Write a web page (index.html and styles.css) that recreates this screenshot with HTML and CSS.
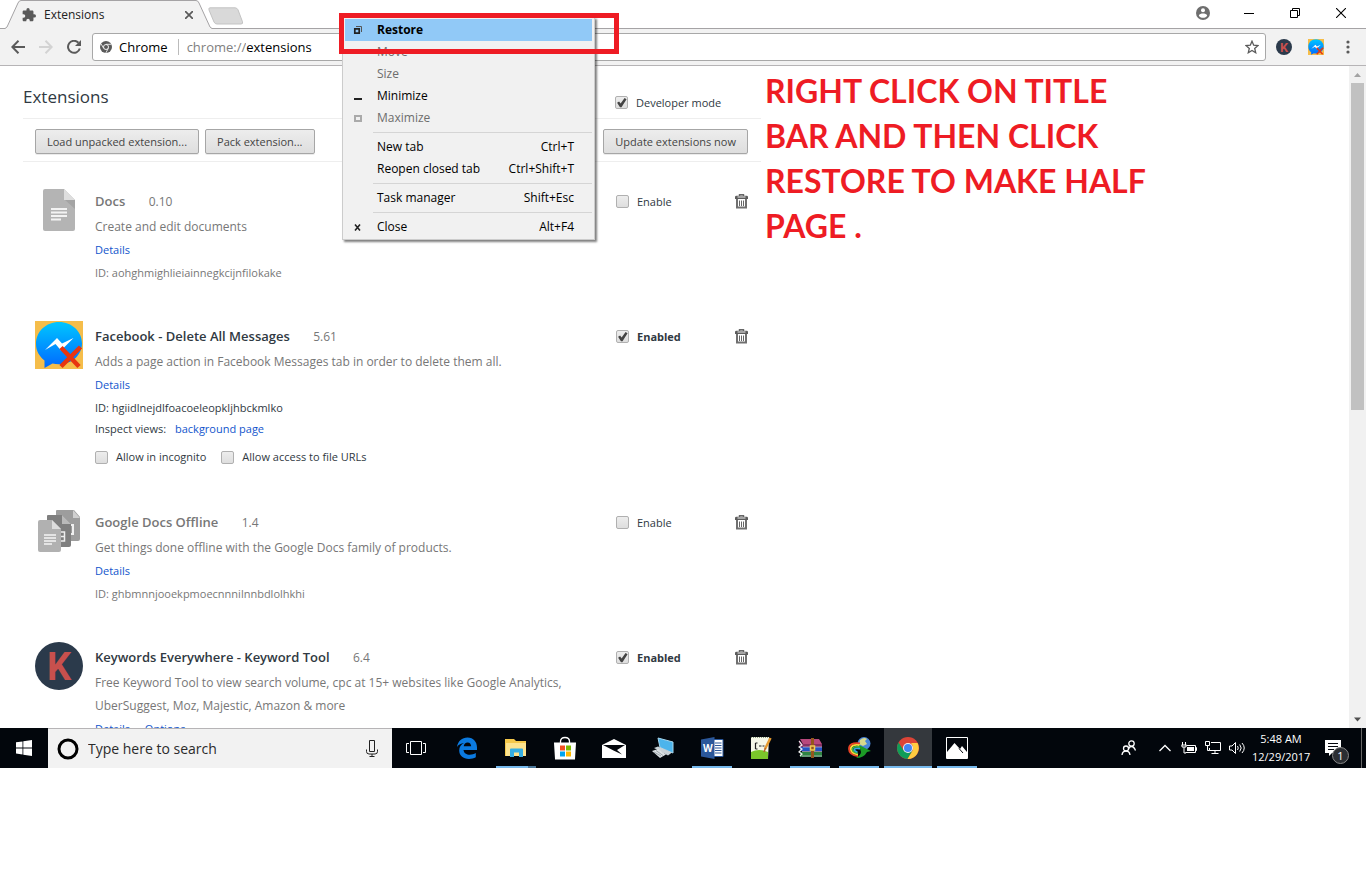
FILE: index.html
```html
<!DOCTYPE html>
<html lang="en">
<head>
    <meta charset="UTF-8">
    <meta name="viewport" content="width=device-width, initial-scale=1.0">
    <title>Extensions</title>
    <link rel="stylesheet" href="styles.css">
</head>
<body>
<!-- shared symbols -->
<svg class="symbols" aria-hidden="true">
    <symbol id="messenger" viewBox="0 0 48 48">
        <linearGradient id="msgBlue" x1="0" y1="0" x2="0" y2="1">
            <stop offset="0" stop-color="#00c6ff"/>
            <stop offset="1" stop-color="#0068ff"/>
        </linearGradient>
        <rect width="48" height="48" fill="#f5bd4a"/>
        <path d="M24 1C11 1 1 10.500 1 23c0 7 3.500 12.500 8.500 16.500V47l8-4.500c2 .5 4.300.8 6.500.8 13 0 23-9.300 23-21S37 1 24 1z" fill="url(#msgBlue)"/>
        <path d="M10 29l12-12 5 5.500L38.500 17 26 29.500 20.500 23z" fill="#fff"/>
        <path d="M26 26.500l18 19M45.500 26L26 45.500" stroke="#e8350f" stroke-width="4.500" fill="none"/>
    </symbol>
    <symbol id="trash" viewBox="0 0 13 15">
        <path d="M4.500 2V.8h4V2" fill="none" stroke="#666" stroke-width="1.400"/>
        <path d="M0 5V3q0-1.300 1.500-1.300h10Q13 1.700 13 3v2z" fill="#5c5c5c"/>
        <path d="M2 5v8.500h9V5" fill="none" stroke="#707070" stroke-width="2"/>
        <path d="M4.500 6.500v5.500M6.500 6.500v5.500M8.500 6.500v5.500" stroke="#666" stroke-width="1"/>
        <path d="M2.500 3h8" stroke="#fff" stroke-width=".9"/>
    </symbol>
    <symbol id="chromeMono" viewBox="0 0 12 12">
        <circle cx="6" cy="6" r="6" fill="#5a5a5a"/>
        <circle cx="6" cy="6" r="2.500" fill="#5a5a5a" stroke="#f2f2f2" stroke-width="1"/>
        <path d="M6 3.300h5.400M3.700 7.300L1 2.800M8.300 7.300L5.800 12" stroke="#f2f2f2" stroke-width=".9"/>
    </symbol>
</svg>

<div class="desktop">
    <div class="tabstrip">
        <div class="tab">
            <svg class="tab-shape" viewBox="0 0 207 29" width="207" height="29">
                <path d="M0 28.500L2 27 13 3q1-2.500 3-2.500h175q2 0 3 2.500l11 24 2 1.500V29H0z" fill="#f2f2f2"/>
                <path d="M0 28.500L2 27 13 3q1-2.500 3-2.500h175q2 0 3 2.500l11 24 2 1.500" fill="none" stroke="#a5a3a5"/>
            </svg>
            <svg width="14" height="14" viewBox="1 1 22 22"><path fill="#5a5a5a" d="M20.500 11H19V7c0-1.100-.9-2-2-2h-4V3.500a2.500 2.500 0 0 0-5 0V5H4c-1.100 0-2 .9-2 2v3.800h1.500a2.700 2.700 0 0 1 0 5.400H2V20c0 1.100.9 2 2 2h3.800v-1.500a2.700 2.700 0 0 1 5.400 0V22H17c1.100 0 2-.9 2-2v-4h1.500a2.500 2.500 0 0 0 0-5z"/></svg>
            <span class="tab-title">Extensions</span>
            <button class="tab-close" aria-label="Close tab"><svg width="8" height="8" viewBox="0 0 8 8"><path d="M0 0l8 8M8 0L0 8" stroke="#5a5a5a" stroke-width="1.700"/></svg></button>
        </div>
        <button class="new-tab" aria-label="New tab"><svg width="36" height="18" viewBox="0 0 36 18"><path d="M2 .8h25q2 0 3 2l4.500 12q.7 2.200-1.500 2.200H9q-2 0-3-2L1 3Q.3.800 2 .8z" fill="#d9d9d9" stroke="#c3c3c3"/></svg></button>
        <div class="window-buttons">
            <button aria-label="Profile"><svg width="14" height="14" viewBox="0 0 14 14"><circle cx="7" cy="7" r="7" fill="#6e6e6e"/><circle cx="7" cy="4.300" r="2" fill="#fff"/><path d="M2.800 9.500C4 6.900 10 6.900 11.200 9.500 10 12.600 4 12.600 2.800 9.500z" fill="#fff"/></svg></button>
            <button aria-label="Minimize"><svg width="10" height="10" viewBox="0 0 10 10"><path d="M0 5.500h10" stroke="#000"/></svg></button>
            <button aria-label="Restore"><svg width="10" height="10" viewBox="0 0 10 10"><path d="M.5 2.500h7v7h-7zM2.500 2.500v-2h7v7h-2" fill="none" stroke="#000"/></svg></button>
            <button aria-label="Close"><svg width="10" height="10" viewBox="0 0 10 10"><path d="M0 0l10 10M10 0L0 10" stroke="#000" stroke-width="1.100"/></svg></button>
        </div>
    </div>

    <div class="toolbar">
        <button aria-label="Back"><svg width="14" height="14" viewBox="0 0 14 14"><path d="M14 7H1.500M7.500.8L1.300 7l6.200 6.200" fill="none" stroke="#5a5a5a" stroke-width="2"/></svg></button>
        <button aria-label="Forward"><svg width="14" height="14" viewBox="0 0 14 14"><path d="M0 7h12.500M6.500.8L12.700 7l-6.200 6.200" fill="none" stroke="#d3d3d3" stroke-width="2"/></svg></button>
        <button aria-label="Reload"><svg width="14" height="14" viewBox="0 0 14 14"><path d="M12.800 8.500a6 6 0 1 1-1.400-5.800" fill="none" stroke="#5a5a5a" stroke-width="2"/><path d="M14 0v6H8z" fill="#5a5a5a"/></svg></button>
        <div class="omnibox">
            <svg width="12" height="12"><use href="#chromeMono"/></svg>
            <span class="origin">Chrome</span>
            <label class="scheme" for="address">chrome://</label>
            <input type="text" id="address" value="extensions">
            <button class="star" aria-label="Bookmark"><svg width="14" height="14" viewBox="0 0 14 14"><path d="M7 1.200l1.700 4 4.300.4-3.300 2.800 1 4.300L7 10.400l-3.700 2.300 1-4.300L1 5.600l4.300-.4z" fill="none" stroke="#5a5a5a" stroke-width="1.300"/></svg></button>
        </div>
        <div class="actions">
            <button aria-label="Keywords Everywhere"><svg width="16" height="16" viewBox="0 0 48 48"><circle cx="24" cy="24" r="24" fill="#2b3a4b"/><text x="24" y="38" text-anchor="middle" class="keywords-k">K</text></svg></button>
            <button aria-label="Delete All Messages"><svg width="16" height="16"><use href="#messenger"/></svg></button>
            <button class="more" aria-label="Menu"><svg width="4" height="14" viewBox="0 0 4 14"><g fill="#5a5a5a"><circle cx="2" cy="2" r="1.600"/><circle cx="2" cy="7" r="1.600"/><circle cx="2" cy="12" r="1.600"/></g></svg></button>
        </div>
    </div>

    <div class="viewport">
        <main class="page">
            <header class="page-header">
                <h1>Extensions</h1>
                <label class="check dev-mode"><input type="checkbox" checked>Developer mode</label>
            </header>
            <div class="dev-controls">
                <button class="btn">Load unpacked extension...</button>
                <button class="btn">Pack extension...</button>
                <button class="btn btn-update">Update extensions now</button>
            </div>

            <section class="extension disabled">
                <svg width="48" height="48" viewBox="0 0 48 48">
                    <path d="M10 3h19l11 11v29q0 2-2 2H10q-2 0-2-2V5q0-2 2-2z" fill="#b4b4b4"/>
                    <path d="M29 3l11 11H29z" fill="#dedede"/>
                    <path d="M30 14h10v9z" fill="#a4a4a4"/>
                    <path d="M16 23h16M16 26.500h16M16 30h16M16 33.500h10" stroke="#f3f3f3" stroke-width="2"/>
                </svg>
                <div class="info">
                    <h2>Docs <span class="version">0.10</span></h2>
                    <p class="description">Create and edit documents</p>
                    <p class="links"><a href="#">Details</a></p>
                    <p class="ext-id">ID: aohghmighlieiainnegkcijnfilokake</p>
                </div>
                <label class="check"><input type="checkbox">Enable</label>
                <button class="trash" aria-label="Remove"><svg width="13" height="15"><use href="#trash"/></svg></button>
            </section>

            <section class="extension">
                <svg width="48" height="48"><use href="#messenger"/></svg>
                <div class="info">
                    <h2>Facebook - Delete All Messages <span class="version">5.61</span></h2>
                    <p class="description">Adds a page action in Facebook Messages tab in order to delete them all.</p>
                    <p class="links"><a href="#">Details</a></p>
                    <p class="ext-id">ID: hgiidlnejdlfoacoeleopkljhbckmlko</p>
                    <p class="views">Inspect views: <a href="#">background page</a></p>
                    <div class="options">
                        <label class="check"><input type="checkbox">Allow in incognito</label>
                        <label class="check"><input type="checkbox">Allow access to file URLs</label>
                    </div>
                </div>
                <label class="check enabled"><input type="checkbox" checked>Enabled</label>
                <button class="trash" aria-label="Remove"><svg width="13" height="15"><use href="#trash"/></svg></button>
            </section>

            <section class="extension disabled">
                <svg width="48" height="48" viewBox="0 0 48 48">
                    <path d="M22 3h17l6 7v22q0 2-2 2H22q-1 0-1-2V4q0-1 1-1z" fill="#9d9d9d"/>
                    <path d="M38 3l7 8h-7z" fill="#d0d0d0"/>
                    <path d="M34 18h4v9h-4" fill="none" stroke="#f0f0f0" stroke-width="2"/>
                    <path d="M13 8h14l9 9v21q0 2-2 2H13q-1 0-1-2V9q0-1 1-1z" fill="#7f7f7f"/>
                    <path d="M27 8l9 9h-9z" fill="#bababa"/>
                    <path d="M22 25h7.500v9H22M22 29.500h7" fill="none" stroke="#eee" stroke-width="1.500"/>
                    <path d="M5 13h12l9 9v21q0 2-2 2H5q-2 0-2-2V15q0-2 2-2z" fill="#b1b1b1"/>
                    <path d="M17 13l9 9h-9z" fill="#ddd"/>
                    <path d="M9 28h12M9 31h12M9 34h12M9 37h8" stroke="#f5f5f5" stroke-width="1.500"/>
                </svg>
                <div class="info">
                    <h2>Google Docs Offline <span class="version">1.4</span></h2>
                    <p class="description">Get things done offline with the Google Docs family of products.</p>
                    <p class="links"><a href="#">Details</a></p>
                    <p class="ext-id">ID: ghbmnnjooekpmoecnnnilnnbdlolhkhi</p>
                </div>
                <label class="check"><input type="checkbox">Enable</label>
                <button class="trash" aria-label="Remove"><svg width="13" height="15"><use href="#trash"/></svg></button>
            </section>

            <section class="extension">
                <svg width="48" height="48" viewBox="0 0 48 48"><circle cx="24" cy="24" r="24" fill="#2b3a4b"/><text x="24" y="38" text-anchor="middle" class="keywords-k">K</text></svg>
                <div class="info">
                    <h2>Keywords Everywhere - Keyword Tool <span class="version">6.4</span></h2>
                    <p class="description">Free Keyword Tool to view search volume, cpc at 15+ websites like Google Analytics, UberSuggest, Moz, Majestic, Amazon &amp; more</p>
                    <p class="links"><a href="#">Details</a> <a href="#">Options</a></p>
                </div>
                <label class="check enabled"><input type="checkbox" checked>Enabled</label>
                <button class="trash" aria-label="Remove"><svg width="13" height="15"><use href="#trash"/></svg></button>
            </section>
        </main>
        <div class="scrollbar">
            <svg width="17" height="17" viewBox="0 0 17 17"><path d="M5 11l3.500-4 3.500 4z" fill="#a3a3a3"/></svg>
            <div class="track"><div class="thumb"></div></div>
            <svg width="17" height="17" viewBox="0 0 17 17"><path d="M5 6.500l3.500 4 3.500-4z" fill="#505050"/></svg>
        </div>
    </div>

    <div class="taskbar">
        <button class="start" aria-label="Start"><svg width="16" height="16" viewBox="0 0 16 16"><path d="M0 2.300L6.500 1.400v6.100H0zM7.300 1.300L16 0v7.500H7.300zM0 8.400h6.500v6.100L0 13.600zM7.300 8.400H16V16l-8.700-1.300z" fill="#fff"/></svg></button>
        <div class="search">
            <svg width="22" height="22" viewBox="0 0 22 22"><circle cx="11" cy="11" r="9" fill="none" stroke="#000" stroke-width="3"/></svg>
            <input type="text" aria-label="Search" placeholder="Type here to search">
            <svg width="12" height="17" viewBox="0 0 12 17"><path d="M3.500.5h5v11h-5zM.5 9.500v2q0 2.500 2.500 2.500h6q2.500 0 2.500-2.500v-2M6 14v2.500M3.500 16.500h5" fill="none" stroke="#222"/></svg>
        </div>
        <button class="app" aria-label="Task view"><svg width="20" height="14" viewBox="0 0 20 14"><path d="M4.500.5h11v13h-11zM3 2.500H.5v9H3M17 2.500h2.500v9H17" fill="none" stroke="#fff"/></svg></button>
        <div class="apps">
            <button class="app" aria-label="Edge"><svg width="22" height="22" viewBox="0 0 22 22"><path d="M1 10C2 4 6 .5 11.500.5 17.500.5 21 5 21 10.500V13H7.500c.3 3.200 3 4.700 6.300 4.700 2.200 0 4.200-.6 6-1.700v4.300C17.800 21.400 15.500 22 13 22 7 22 3.200 18.500 3.200 13.600 3.200 10 5 7.500 8 6 5 6.300 2.700 7.500 1 10zM7.700 9.300h7.500C15 6.800 13.800 5.500 11.700 5.500 9.500 5.500 8 7 7.700 9.300z" fill="#0b7ae0"/></svg></button>
            <button class="app running multi" aria-label="File Explorer"><svg width="22" height="20" viewBox="0 0 22 20"><path d="M0 1h9l2 2h10v15H0z" fill="#f5c84b"/><path d="M1 5h20v13H1z" fill="#fde38f"/><path d="M5 19v-7.500q0-1 1-1h11q1 0 1 1V19h-4v-4.500H9V19z" fill="#36aee2"/></svg></button>
            <button class="app" aria-label="Store"><svg width="24" height="24" viewBox="0 0 24 24"><path d="M7.500 8V5.500q0-4 4.500-4t4.500 4V8" fill="none" stroke="#fff" stroke-width="1.300"/><path d="M1 6.500h22l-1 17H2z" fill="#fff"/><path d="M7 9.500h5v5H7z" fill="#f25022"/><path d="M13 9.500h5v5h-5z" fill="#7fba00"/><path d="M7 15.500h5v5H7z" fill="#00a4ef"/><path d="M13 15.500h5v5h-5z" fill="#ffb900"/></svg></button>
            <button class="app" aria-label="Mail"><svg width="24" height="19" viewBox="0 0 24 19"><path d="M0 6L12 0l12 6v13H0z" fill="#fff"/><path d="M1 6h22l-8 5 5 4.500-8.500-4z" fill="#04070d"/></svg></button>
            <button class="app" aria-label="Computer"><svg width="24" height="22" viewBox="0 0 24 22"><path d="M7 1l15 4v11L9 10.500z" fill="#4cb4ec" stroke="#a5d6ef"/><path d="M3 11l4-1.500 14 6-4 3z" fill="#c9d1d6"/><path d="M1 14l6-2 8 5.500-6 3.500z" fill="#dce1e4"/><path d="M3 15l7 4M5 13.500l7 5" stroke="#8c969c" stroke-width=".8"/></svg></button>
            <button class="app running" aria-label="Word"><svg width="23" height="22" viewBox="0 0 23 22"><path d="M12 2.500h10v17H12z" fill="#fff" stroke="#2b579a"/><path d="M14 6h6.500M14 8.500h6.500M14 11h6.500M14 13.500h6.500M14 16h6.500" stroke="#2b579a"/><path d="M0 2.500L13.500 0v22L0 19.500z" fill="#2b579a"/><text x="2" y="15" class="word-w">W</text></svg></button>
            <button class="app" aria-label="Notes"><svg width="24" height="24" viewBox="0 0 24 24"><path d="M2 1h18l-1 22H2z" fill="#f5f7e8"/><path d="M2 16q8-4 17 0v7H2z" fill="#7ac62b"/><path d="M2 1.500h18" stroke="#8a9a80" stroke-dasharray="1 1"/><path d="M6.500 7v6M6.500 7h2M6.500 13h2M10 10h2.500M13.500 10h2" fill="none" stroke="#222" stroke-width="1.200"/><path d="M21.500 2L16 13" stroke="#e59a2f" stroke-width="2.500"/><path d="M16.500 12L15 16" stroke="#b5652b" stroke-width="1.500"/></svg></button>
            <button class="app running" aria-label="WinRAR"><svg width="24" height="20" viewBox="0 0 24 20"><path d="M2 1h19l3 5H5z" fill="#b8487d"/><path d="M1 2l4 4h19v3H2z" fill="#863064"/><path d="M2 9h22v4H2z" fill="#2553c5"/><path d="M2 14h22v5H2z" fill="#2e8442"/><path d="M1 3l3 4-3 2 3 2-3 3 3 2-2 2" fill="none" stroke="#eee" stroke-width="1.200"/><path d="M5 9h19M4 13.500h20M4 18h20" stroke="#c8c2d7" stroke-width=".7"/><path d="M13 0h3v20h-3z" fill="#95561d"/><path d="M12.500 8h4v4h-4z" fill="none" stroke="#f1cb56" stroke-width="1.500"/></svg></button>
            <button class="app running" aria-label="Download Manager"><svg width="24" height="22" viewBox="0 0 24 22"><circle cx="17" cy="6.500" r="6.500" fill="#4a86d8"/><path d="M13 3q4-3.500 7-1l-2 2 2 3-4 2-4-2z" fill="#d8d98c"/><path d="M13 6.500Q2 5 2 12q0 6 9 7" fill="none" stroke="#e84225" stroke-width="1.800"/><path d="M13 8.200Q3.800 7 3.800 12q0 4.500 7.200 5.500" fill="none" stroke="#ffd838" stroke-width="1.800"/><path d="M13 10Q5.600 9 5.600 12q0 3 5 4" fill="none" stroke="#38b54a" stroke-width="1.800"/><path d="M13 11.600Q7.400 11 7.400 12.500q0 1.500 3 2.500" fill="none" stroke="#36a8e8" stroke-width="1.600"/><path d="M12 8l12 6-4 1q-3 6-11 6 5-3 5-6z" fill="#1c9a26"/></svg></button>
            <button class="app running active" aria-label="Chrome"><svg width="22" height="22" viewBox="0 0 22 22"><circle cx="11" cy="11" r="11" fill="#db4437"/><path d="M1.500 5.500A11 11 0 0 0 10.500 22l5-8.500H11L6.700 13.500z" fill="#0f9d58"/><path d="M20.600 6A11 11 0 0 1 10.500 22l5.200-8.500Q17 9 14 6z" fill="#ffcd40"/><circle cx="11" cy="11" r="5" fill="#f1f1f1"/><circle cx="11" cy="11" r="4" fill="#4285f4"/></svg></button>
            <button class="app running" aria-label="Photos"><svg width="22" height="22" viewBox="0 0 22 22"><path d="M.5.5h21v21H.5z" fill="none" stroke="#fff"/><path d="M1 15l7.500-9 5.500 6L16 9l5 6v6H1z" fill="#fff"/><path d="M13 11.500l4 4.500" stroke="#04070d"/></svg></button>
        </div>
        <div class="tray">
            <button aria-label="People"><svg width="16" height="16" viewBox="0 0 16 16"><g fill="none" stroke="#fff" stroke-width="1.300"><circle cx="10.500" cy="3.500" r="2.700"/><path d="M7.500 9.500q.5-3 3-3t4 4"/><circle cx="5" cy="8.500" r="2.500"/><path d="M1 15q.5-4 4-4t4 4"/></g></svg></button>
            <button aria-label="Show hidden icons"><svg width="12" height="8" viewBox="0 0 12 8"><path d="M.5 7L6 1.500 11.500 7" fill="none" stroke="#fff" stroke-width="1.300"/></svg></button>
            <button aria-label="Battery"><svg width="16" height="12" viewBox="0 0 16 12"><path d="M5.500 3.500h9v7H4.500M14.500 5.500h1v3h-1" fill="none" stroke="#fff"/><path d="M6 5h7v4H6z" fill="#fff"/><path d="M1.500 0v3M4.500 0v3M.5 3h5M1 3v2h4V3M3 5v6h2" fill="none" stroke="#fff"/></svg></button>
            <button aria-label="Network"><svg width="16" height="14" viewBox="0 0 16 14"><path d="M6 1.500h9.500v8h-11V7M10 9.500v3M6.500 12.500h7M.5.500h4v4h-4zM2.500 4.500v5h2" fill="none" stroke="#fff"/></svg></button>
            <button aria-label="Volume"><svg width="17" height="14" viewBox="0 0 17 14"><path d="M.5 5H3l3.500-3.500v11L3 9H.500z" fill="none" stroke="#fff"/><path d="M8.500 5q1.500 2 0 4M10.700 3.500q3 3.500 0 7M13 2q4.500 5 0 10" fill="none" stroke="#fff"/></svg></button>
            <div class="clock">5:48 AM<br>12/29/2017</div>
            <button class="notifications" aria-label="Notifications">
                <svg width="16" height="16" viewBox="0 0 16 16"><path d="M0 0h16v13H7l-3 3v-3H0z" fill="#fff"/><path d="M3 3.500h10M3 6.500h10M3 9.500h6" stroke="#04070d"/></svg>
                <span class="count">1</span>
            </button>
            <div class="show-desktop"></div>
        </div>
    </div>
</div>

<!-- window menu -->
<div class="menu">
    <button class="menu-item selected"><svg width="12" height="8" viewBox="0 0 12 8"><path d="M2.800 2.800h4.400v4.400H2.800z" fill="none" stroke="#222" stroke-width="1.700"/><path d="M4 .5h5.500V6" fill="none" stroke="#555"/></svg>Restore</button>
    <button class="menu-item" disabled><i></i>Move</button>
    <button class="menu-item" disabled><i></i>Size</button>
    <button class="menu-item"><svg width="12" height="8" viewBox="0 0 12 8"><path d="M2 6h8v2H2z" fill="#222"/></svg>Minimize</button>
    <button class="menu-item" disabled><svg width="12" height="8" viewBox="0 0 12 8"><path d="M3 2h6v5H3z" fill="none" stroke="#aaa" stroke-width="2"/></svg>Maximize</button>
    <hr>
    <button class="menu-item"><i></i>New tab<kbd>Ctrl+T</kbd></button>
    <button class="menu-item"><i></i>Reopen closed tab<kbd>Ctrl+Shift+T</kbd></button>
    <hr>
    <button class="menu-item"><i></i>Task manager<kbd>Shift+Esc</kbd></button>
    <hr>
    <button class="menu-item"><svg width="12" height="8" viewBox="0 0 12 8"><path d="M3 1.500l5 6M8 1.500l-5 6" stroke="#222" stroke-width="1.600"/></svg>Close<kbd>Alt+F4</kbd></button>
</div>

<div class="highlight-box"></div>
<p class="note">RIGHT CLICK ON TITLE<br>BAR AND THEN CLICK<br>RESTORE TO MAKE HALF<br>PAGE .</p>
</body>
</html>
```
FILE: styles.css
```css
* {
    box-sizing: border-box;
}
body {
    margin: 0;
    background: #fff;
    font-family: "Open Sans", "Noto Sans", sans-serif;
    font-size: 12px;
    color: #303942;
}
button {
    font-family: inherit;
    font-size: inherit;
    color: inherit;
    border: none;
    background: none;
    padding: 0;
}
svg {
    display: block;
    flex: none;
}
.symbols {
    position: absolute;
    width: 0;
    height: 0;
}
.keywords-k {
    font-family: Roboto, sans-serif;
    font-size: 38px;
    font-weight: bold;
    fill: #c8504d;
}
.desktop {
    display: flex;
    flex-direction: column;
    height: 100vh;
    padding-bottom: 114px;
}

/* tab strip */
.tabstrip {
    display: flex;
    height: 29px;
    flex: none;
    border-bottom: 1px solid #a5a3a5;
}
.tab {
    position: relative;
    display: flex;
    align-items: center;
    width: 207px;
    height: 29px;
    margin-left: 5px;
    padding: 0 19px 0 17px;
    color: #222;
}
.tab svg {
    position: relative;
}
.tab .tab-shape {
    position: absolute;
    left: 0;
    top: 0;
}
.tab-title {
    position: relative;
    flex: 1;
    margin-left: 8px;
}
.new-tab {
    align-self: flex-start;
    padding-top: 7px;
    margin-left: -4px;
}
.window-buttons {
    display: flex;
    align-items: center;
    margin: 0 2px 0 auto;
    padding-bottom: 2px;
}
.window-buttons button {
    display: flex;
    justify-content: center;
    width: 46px;
}

/* toolbar */
.toolbar {
    display: flex;
    align-items: center;
    gap: 14px;
    height: 37px;
    flex: none;
    padding: 0 16px 0 11px;
    background: #f2f2f2;
    border-bottom: 1px solid #b6b4b6;
}
.omnibox {
    display: flex;
    align-items: center;
    flex: 1;
    height: 28px;
    margin: 0 -4px 0 -3px;
    padding: 0 6px 0 7px;
    background: #fff;
    border: 1px solid #a8a8a8;
    border-radius: 3px;
    font-size: 13px;
    color: #000;
}
.origin {
    margin-left: 7px;
    padding-right: 10px;
    border-right: 1px solid #bbb;
    line-height: 16px;
}
.scheme {
    margin-left: 8px;
    color: #808080;
}
.omnibox input {
    flex: 1;
    border: none;
    padding: 0;
    font: inherit;
    color: #000;
}
.actions {
    display: flex;
    align-items: center;
    gap: 16px;
}
.more {
    margin-left: 6px;
}

/* extensions page */
.viewport {
    display: flex;
    flex: 1;
    min-height: 0;
    overflow: hidden;
}
.page {
    flex: 1;
    max-width: 761px;
    padding-left: 23px;
}
.page-header {
    display: flex;
    justify-content: space-between;
    align-items: center;
    height: 53px;
    padding-top: 9px;
    border-bottom: 1px solid #eee;
}
h1 {
    margin: 0;
    font-size: 17px;
    font-weight: normal;
}
.dev-mode {
    width: 146px;
    padding-top: 12px;
}
.dev-controls {
    display: flex;
    align-items: center;
    gap: 6px;
    height: 43px;
    padding: 2px 13px 0 12px;
    border-bottom: 1px solid #eee;
}
.btn {
    height: 25px;
    padding: 0 11px;
    border: 1px solid #a6a6a6;
    border-radius: 2px;
    background: linear-gradient(#ededed, #dedede);
    box-shadow: 0 1px 0 rgba(0, 0, 0, 0.08);
    font-size: 11px;
    color: #444;
}
.btn-update {
    margin-left: auto;
}
.check {
    display: flex;
    align-items: center;
    gap: 8px;
    font-size: 11px;
}
.check input {
    appearance: none;
    width: 13px;
    height: 13px;
    margin: 0;
    border: 1px solid #b0b0b0;
    border-radius: 2px;
    background: linear-gradient(#ededed, #dedede);
}
.check input:checked::before {
    content: "";
    display: block;
    width: 11px;
    height: 11px;
    background: #444;
    clip-path: polygon(10% 52%, 28% 42%, 42% 60%, 78% 8%, 96% 20%, 50% 94%, 36% 94%);
}
.extension {
    display: grid;
    grid-template-columns: 48px 1fr 119px 26px;
    align-items: start;
    margin-left: 12px;
    padding-bottom: 37px;
}
.dev-controls + .extension {
    margin-top: 24px;
}
.info {
    padding: 2px 24px 0 12px;
}
.extension h2 {
    margin: 0;
    font-size: 13px;
    font-weight: 600;
    line-height: 27px;
}
.version {
    margin-left: 20px;
    font-size: 12px;
    font-weight: normal;
    color: #777;
}
.extension p {
    margin: 0;
}
.extension .description {
    line-height: 23px;
    color: #777;
}
.extension .links {
    font-size: 11px;
    line-height: 24px;
}
.links a {
    margin-right: 12px;
}
.ext-id {
    font-size: 11px;
    line-height: 22px;
}
.views {
    font-size: 11px;
    line-height: 20px;
}
.views a {
    margin-left: 6px;
}
.options {
    display: flex;
    gap: 15px;
    padding: 7px 0 2px;
    font-size: 11px;
    line-height: 22px;
}
a {
    color: #15c;
    text-decoration: none;
}
.disabled h2,
.disabled .ext-id {
    color: #777;
}
.extension > .check {
    padding-top: 8px;
}
.extension > .enabled {
    font-weight: bold;
}
.trash {
    padding-top: 8px;
}
.scrollbar {
    display: flex;
    flex-direction: column;
    width: 17px;
    margin-left: auto;
    background: #f1f1f1;
}
.track {
    flex: 1;
    padding: 0 2px;
}
.thumb {
    height: 52%;
    background: #c1c1c1;
}

/* taskbar */
.taskbar {
    display: flex;
    height: 40px;
    flex: none;
    background: #02060c;
    color: #fff;
}
.start {
    display: flex;
    align-items: center;
    justify-content: center;
    width: 48px;
}
.search {
    display: flex;
    align-items: center;
    width: 344px;
    padding: 0 14px 0 9px;
    background: #f2f2f2;
    border-top: 1px solid #b6b4b6;
}
.search input {
    flex: 1;
    min-width: 0;
    margin-left: 9px;
    padding: 0;
    border: none;
    background: none;
    font-family: inherit;
    font-size: 14px;
}
.search input::placeholder {
    color: #2b2b2b;
}
.apps {
    display: flex;
    gap: 1px;
    margin-left: 3px;
}
.app {
    position: relative;
    display: flex;
    align-items: center;
    justify-content: center;
    width: 48px;
    height: 40px;
}
.running::after {
    content: "";
    position: absolute;
    left: 4px;
    right: 4px;
    bottom: 0;
    height: 2px;
    background: #76b9ed;
}
.multi::after {
    background: linear-gradient(to right, #76b9ed 80%, #4a7699 80%);
}
.active {
    background: #34383d;
}
.active::after {
    left: 0;
    right: 0;
}
.word-w {
    font-family: "Open Sans", sans-serif;
    font-size: 10px;
    font-weight: bold;
    fill: #fff;
}
.tray {
    display: flex;
    align-items: center;
    gap: 8px;
    margin-left: auto;
}
.tray button:first-child {
    margin-right: 14px;
}
.tray button:nth-child(2) {
    margin-right: 2px;
}
.clock {
    width: 58px;
    margin-left: -2px;
    font-size: 11px;
    line-height: 18px;
    text-align: center;
}
.notifications {
    position: relative;
    margin: 0 12px 0 7px;
}
.count {
    position: absolute;
    left: 7px;
    top: 7px;
    width: 17px;
    height: 17px;
    border: 1px solid #888;
    border-radius: 50%;
    background: #2b2e33;
    font-size: 11px;
    line-height: 15px;
    text-align: center;
}
.show-desktop {
    width: 5px;
    height: 40px;
    border-left: 1px solid #666;
}

/* window menu */
.menu {
    position: absolute;
    left: 342px;
    top: 17px;
    width: 253px;
    padding: 1px 2px;
    background: #f1f1f1;
    border: 1px solid #ccc;
    box-shadow: 2px 2px 2px rgba(0, 0, 0, 0.5);
    color: #000;
}
.menu-item {
    display: flex;
    align-items: center;
    width: 100%;
    height: 22px;
    padding: 0 18px 2px 7px;
}
.menu-item svg,
.menu-item i {
    width: 12px;
    margin-right: 13px;
}
.menu-item svg {
    margin-top: 2px;
}
.menu-item:disabled {
    color: #6d6d6d;
}
.selected {
    background: #91c9f7;
    font-weight: bold;
}
.menu kbd {
    margin-left: auto;
    font-family: inherit;
}
.menu hr {
    margin: 3px 0 3px 28px;
    border: none;
    border-top: 1px solid #d5d5d5;
}

/* annotation */
.highlight-box {
    position: absolute;
    left: 339px;
    top: 13px;
    width: 280px;
    height: 41px;
    border: 5px solid #ee1c24;
}
.note {
    position: absolute;
    left: 765px;
    top: 68px;
    margin: 0;
    font-family: Lato, sans-serif;
    font-size: 32px;
    font-weight: bold;
    line-height: 45px;
    color: #ee1c24;
}
```
